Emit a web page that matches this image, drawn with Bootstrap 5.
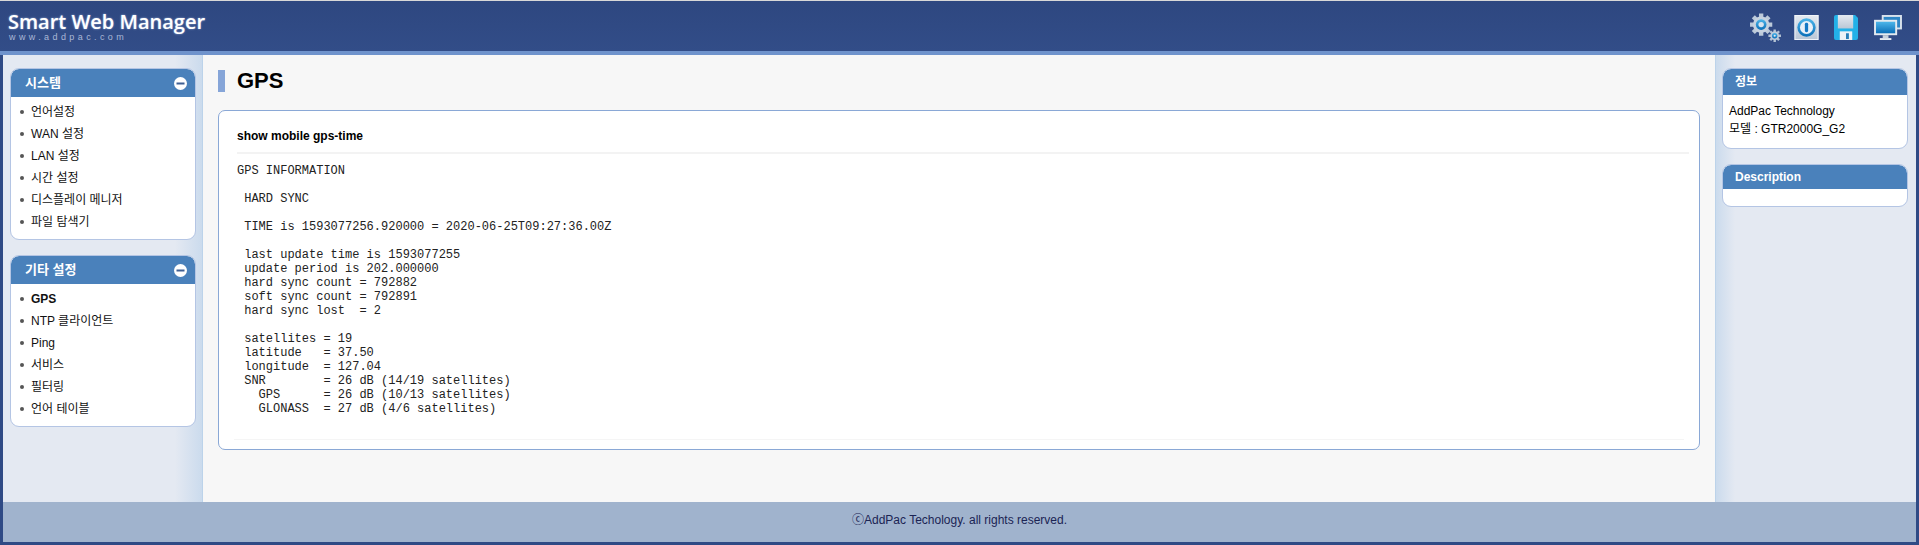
<!DOCTYPE html>
<html lang="ko">
<head>
<meta charset="utf-8">
<title>Smart Web Manager</title>
<link href="https://cdn.jsdelivr.net/npm/bootstrap@5.3.0/dist/css/bootstrap.min.css" rel="stylesheet">
<style>
html,body{height:100%;}
body{background:#2f4a85;font-family:"Liberation Sans","Noto Sans CJK KR",sans-serif;font-size:12px;color:#000;overflow:hidden;border-top:1px solid #d8d8d8;}
.shell{height:544px;}
.topbar{height:50px;padding:0 17px 0 8px;background:linear-gradient(#2e4780,#324d88);}
.brand{margin-top:9px;}
.brand-main{color:#fff;font-family:"Open Sans",sans-serif;font-weight:600;font-size:20px;line-height:23px;text-shadow:0 0 2px #9fb4dc;}
.brand-sub{color:#aab8d6;font-size:9px;line-height:9px;letter-spacing:3.4px;margin-left:1px;}
.tools{margin-top:12px;}
.tool-gear{margin-right:12px;}
.tool-info{margin-right:15px;}
.tool-disk{margin-right:16px;}
.strip{height:4px;background:#6f93cc;}
.mid{height:447px;margin:0 3px;min-height:0;}
.side{width:200px;flex:none;background:#e4e9f2;padding:13px 7px 0;border-right:1px solid #bcd3ea;background-image:linear-gradient(90deg,#e4e9f2 172px,#cbdbed 199px);}
.side-r{width:201px;border-right:0;border-left:1px solid #bcd3ea;background-image:linear-gradient(270deg,#e4e9f2 181px,#cbdbed 200px);padding:13px 8px 0 6px;}
.pane{--bs-card-border-color:#b4c5e4;--bs-card-border-radius:9px;--bs-card-inner-border-radius:8px;--bs-card-bg:#fff;margin-bottom:15px;width:186px;}
.pane-head{background:#4a81bb;color:#fff;font-weight:700;font-size:13px;height:28px;padding:0 8px 0 14px;border:0;}
.side-r .pane-head{padding-left:12px;height:26px;font-size:12px;}
.side-r .pane-d .pane-head{height:24px;}
.pane-list{list-style:none;margin:0;padding:4px 0 6px 9px;}
.pane-list li{height:22px;line-height:22px;font-size:12px;color:#111;}
.pane-list li::before{content:"";display:inline-block;width:4px;height:4px;border-radius:50%;background:#555;margin-right:7px;vertical-align:2px;}
.pane-list li.on{font-weight:700;}
.toggle{width:13px;height:13px;}
.pane-info{padding:7px 6px 0;height:53px;line-height:18px;font-size:12px;}
.pane-empty{height:17px;}
.main{flex:1;min-width:0;background:#f7f7f7;padding:15px 15px 0;}
.page-h{font-size:22px;line-height:22px;font-weight:700;margin:0 0 18px;border-left:7px solid #86a5d8;padding-left:12px;height:22px;}
.result{--bs-card-border-color:#8aa8d6;--bs-card-border-radius:7px;height:340px;}
.result-body{padding:0 15px 0;}
.cmd{font-size:12px;font-weight:700;height:43px;line-height:50px;margin:0 -5px 0 3px;border-bottom:2px solid #f3f3f3;}
.out{font-family:"Liberation Mono",monospace;font-size:12px;line-height:14px;margin:10px 0 0 3px;color:#222;overflow:visible;}
.foot-line{position:absolute;left:15px;right:15px;bottom:9px;height:1px;background:#f5f5f5;}
.foot{height:40px;margin:0 3px;background:#a0b3cd;color:#1b2454;font-size:12px;line-height:37px;text-align:center;}
</style>
</head>
<body>
<div class="shell d-flex flex-column">
  <header class="topbar d-flex justify-content-between align-items-start">
    <div class="brand"><div class="brand-main">Smart Web Manager</div><div class="brand-sub">www.addpac.com</div></div>
    <div class="tools d-flex align-items-center">
      <svg class="tool-gear" width="33" height="29" viewBox="0 0 33 30"><defs>
        <linearGradient id="g1" x1="0" y1="0" x2="0" y2="1"><stop offset="0" stop-color="#e6edf4"/><stop offset="1" stop-color="#8fa2ba"/></linearGradient>
        <linearGradient id="g2" x1="0" y1="0" x2="0" y2="1"><stop offset="0" stop-color="#4db6ea"/><stop offset="1" stop-color="#0a6fb8"/></linearGradient>
        <linearGradient id="g3" x1="0" y1="0" x2="0" y2="1"><stop offset="0" stop-color="#e4eaf1"/><stop offset="1" stop-color="#bac7d6"/></linearGradient>
        </defs>
        <path d="M12 .5v23M.5 12h23M3.900 3.900l16.200 16.200M20.100 3.900L3.900 20.100" stroke="#bccada" stroke-width="4.500"/>
        <circle cx="12" cy="12" r="8.500" fill="#c6d2e0"/><circle cx="12" cy="12" r="5.500" fill="url(#g2)"/><circle cx="12" cy="12" r="2.800" fill="#d6e4f0"/>
        <path d="M26 17v13M19.500 23.500h13M21.400 18.900l9.200 9.200M30.600 18.900l-9.200 9.200" stroke="#b4c3d4" stroke-width="2.500"/><circle cx="26" cy="23.500" r="4.500" fill="#c0ccdb"/><circle cx="26" cy="23.500" r="2.800" fill="url(#g2)"/><circle cx="26" cy="23.500" r="1.100" fill="#e0e8f0"/>
      </svg>
      <svg class="tool-info" width="25" height="25" viewBox="0 0 25 26"><rect width="25" height="26" fill="url(#g3)"/><rect x=".5" y=".5" width="24" height="25" fill="none" stroke="#f2f5f9"/><circle cx="12.500" cy="13" r="9.500" fill="url(#g2)"/><circle cx="12.500" cy="13" r="6.800" fill="#e8f0f8"/><rect x="10.800" y="8" width="3.400" height="10" rx="1.500" fill="#1478c4"/></svg>
      <svg class="tool-disk" width="24" height="25" viewBox="0 0 25 26"><path d="M2 0h20l3 3v21a2 2 0 0 1-2 2H2a2 2 0 0 1-2-2V2a2 2 0 0 1 2-2z" fill="#22b1e8"/><rect x="4" y="0" width="16" height="14" fill="url(#g3)"/><rect x="6" y="17" width="13" height="9" fill="#eef2f6"/><rect x="12.500" y="19" width="3" height="6" fill="#2a7fb8"/></svg>
      <svg width="28" height="25" viewBox="0 0 29 26"><rect x="8" y="0" width="21" height="15" fill="#d8e2ec"/><rect x="10" y="2" width="17" height="11" fill="#2d86c6"/><rect x="0" y="5" width="24" height="16" fill="#e4eaf0"/><rect x="2" y="7" width="20" height="12" fill="url(#g2)"/><rect x="9" y="21" width="6" height="3" fill="#c8d2dc"/><rect x="6" y="24" width="12" height="2" fill="#e4eaf0"/></svg>
    </div>
  </header>
  <div class="strip"></div>
  <div class="mid d-flex">
    <aside class="side">
      <section class="card pane overflow-hidden">
        <div class="card-header pane-head d-flex justify-content-between align-items-center"><span>시스템</span><svg class="toggle" viewBox="0 0 13 13"><circle cx="6.500" cy="6.500" r="6.500" fill="#fff"/><rect x="2.500" y="5.500" width="8" height="2" fill="#3f5f93"/></svg></div>
        <ul class="pane-list">
          <li>언어설정</li><li>WAN 설정</li><li>LAN 설정</li><li>시간 설정</li><li>디스플레이 메니저</li><li>파일 탐색기</li>
        </ul>
      </section>
      <section class="card pane overflow-hidden">
        <div class="card-header pane-head d-flex justify-content-between align-items-center"><span>기타 설정</span><svg class="toggle" viewBox="0 0 13 13"><circle cx="6.500" cy="6.500" r="6.500" fill="#fff"/><rect x="2.500" y="5.500" width="8" height="2" fill="#3f5f93"/></svg></div>
        <ul class="pane-list">
          <li class="on">GPS</li><li>NTP 클라이언트</li><li>Ping</li><li>서비스</li><li>필터링</li><li>언어 테이블</li>
        </ul>
      </section>
    </aside>
    <main class="main">
      <h1 class="page-h">GPS</h1>
      <div class="card result position-relative">
        <div class="result-body">
          <div class="cmd">show mobile gps-time</div>
<pre class="out">GPS INFORMATION

 HARD SYNC

 TIME is 1593077256.920000 = 2020-06-25T09:27:36.00Z

 last update time is 1593077255
 update period is 202.000000
 hard sync count = 792882
 soft sync count = 792891
 hard sync lost  = 2

 satellites = 19
 latitude   = 37.50
 longitude  = 127.04
 SNR        = 26 dB (14/19 satellites)
   GPS      = 26 dB (10/13 satellites)
   GLONASS  = 27 dB (4/6 satellites)</pre>
        </div>
        <div class="foot-line"></div>
      </div>
    </main>
    <aside class="side side-r">
      <section class="card pane overflow-hidden">
        <div class="card-header pane-head d-flex align-items-center">정보</div>
        <div class="pane-info">AddPac Technology<br>모델 : GTR2000G_G2</div>
      </section>
      <section class="card pane pane-d overflow-hidden">
        <div class="card-header pane-head d-flex align-items-center">Description</div>
        <div class="pane-empty"></div>
      </section>
    </aside>
  </div>
  <footer class="foot">ⓒAddPac Techology. all rights reserved.</footer>
</div>
<script src="https://cdn.jsdelivr.net/npm/bootstrap@5.3.0/dist/js/bootstrap.bundle.min.js"></script>
</body>
</html>
